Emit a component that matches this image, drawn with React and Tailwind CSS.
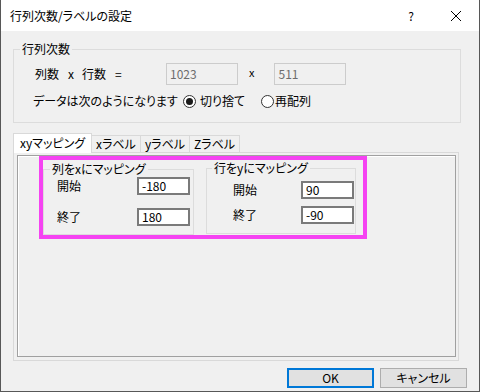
import React from 'react';

const jp = "font-['Noto_Sans_CJK_JP',sans-serif] [font-feature-settings:'palt']";

function Radio({ checked }) {
  return (
    <span className="flex w-[13px] h-[13px] shrink-0 items-center justify-center rounded-full border border-[#333] bg-white">
      {checked && <span className="w-[7px] h-[7px] rounded-full bg-[#1a1a1a]" />}
    </span>
  );
}

function Champ({ valeur, desactive, className = '' }) {
  if (desactive) {
    return (
      <div className={`flex items-center h-[22px] w-[72px] border border-[#cccccc] bg-[#f0f0f0] pl-[3px] text-[12px] text-[#6d6d6d] ${className}`}>
        {valeur}
      </div>
    );
  }
  return (
    <div className={`flex items-center h-[18px] w-[53px] border-2 border-[#7a7a7a] bg-white pl-[3px] text-[12px] text-black ${className}`}>
      {valeur}
    </div>
  );
}

function Ligne({ label, valeur, largeur, className = '' }) {
  return (
    <div className={`flex items-center ${className}`}>
      <span className={`${largeur} text-[12px] leading-[16px]`}>{label}</span>
      <Champ valeur={valeur} />
    </div>
  );
}

export default function App() {
  const onglets = ['xラベル', 'yラベル', 'Zラベル'];
  const largeursOnglets = ['w-[50px]', 'w-[50px]', 'w-[51px]'];

  return (
    <div className={`w-[480px] h-[392px] bg-[#f0f0f0] border-l border-r border-b border-[#575757] flex flex-col text-black ${jp}`}>

      {/* barre de titre */}
      <div className="h-[31px] shrink-0 bg-white flex items-center pl-[9px]">
        <span className="text-[12px] leading-[16px]">行列次数/ラベルの設定</span>
        <span className="ml-auto text-[12px] leading-[16px] mr-[36px]">?</span>
        <svg className="w-[12px] h-[12px] mr-[17px]" viewBox="0 0 12 12" fill="none" stroke="#000" strokeWidth="1">
          <path d="M1 1l10 10M11 1L1 11" />
        </svg>
      </div>

      {/* groupe 行列次数 */}
      <fieldset className="mt-[10px] ml-[12px] w-[448px] border border-[#dcdcdc] p-0 m-0">
        <legend className="ml-[6px] px-[2px] text-[12px] leading-[16px]">行列次数</legend>
        <div className="pl-[19px] pb-[13px]">
          <div className="flex items-center mt-[6px] h-[22px]">
            <div className="w-[133px] flex items-center pl-[2px] text-[12px] leading-[16px]">
              <span>列数</span>
              <span className="ml-[9px]">x</span>
              <span className="ml-[8px]">行数</span>
              <span className="ml-[9px]">=</span>
            </div>
            <Champ valeur="1023" desactive />
            <span className="ml-[11px] text-[11px] leading-[16px] -mt-[4px]">x</span>
            <Champ valeur="511" desactive className="ml-[20px] w-[71px]" />
          </div>
          <div className="flex items-center mt-[8px] h-[16px] text-[12px] leading-[16px]">
            <span className="w-[150px]">データは次のようになります</span>
            <Radio checked />
            <span className="ml-[4px] w-[61px]">切り捨て</span>
            <Radio />
            <span className="ml-[1px]">再配列</span>
          </div>
        </div>
      </fieldset>

      {/* onglets */}
      <div className="mt-[10px] ml-[12px] flex items-end h-[19px]">
        <div className="relative z-10 -mb-px h-[20px] w-[79px] bg-white border border-b-0 border-[#d9d9d9] flex items-center pl-[6px] text-[12px] leading-[16px] pb-[1px]">
          xyマッピング
        </div>
        {onglets.map((o, i) => (
          <div key={o} className={`h-[17px] ${largeursOnglets[i]} -ml-px border border-b-0 border-[#d9d9d9] bg-[#f0f0f0] flex items-center justify-center text-[12px] leading-[16px]`}>
            {o}
          </div>
        ))}
      </div>

      {/* panneau */}
      <div className="ml-[12px] w-[446px] h-[209px] border border-[#d9d9d9] pl-[3px] pt-[2px]">
        <div className="w-[439px] h-[202px] border border-[#a0a0a0] shadow-[inset_1px_1px_0_#ffffff]">
          <div className="ml-[21px] w-[328px] border-4 border-[#f543f2] flex items-start">
            <fieldset className="mt-px w-[151px] border border-[#dcdcdc] p-0 m-0">
              <legend className="ml-[6px] px-[2px] text-[12px] leading-[16px]">列をxにマッピング</legend>
              <div className="pl-[13px] pb-[8px]">
                <Ligne label="開始" valeur="-180" largeur="w-[80px]" />
                <Ligne label="終了" valeur="180" largeur="w-[80px]" className="mt-[13px]" />
              </div>
            </fieldset>
            <fieldset className="ml-[12px] w-[150px] border border-[#dcdcdc] p-0 m-0">
              <legend className="ml-[5px] px-[2px] text-[12px] leading-[16px]">行をyにマッピング</legend>
              <div className="pl-[26px] pt-[5px] pb-[9px]">
                <Ligne label="開始" valeur="90" largeur="w-[68px]" />
                <Ligne label="終了" valeur="-90" largeur="w-[68px]" className="mt-[7px]" />
              </div>
            </fieldset>
          </div>
        </div>
      </div>

      {/* boutons */}
      <div className="mt-[7px] flex justify-end gap-[6px] mr-[12px]">
        <button className="h-[20px] w-[87px] border-2 border-[#0078d7] bg-[#e1e1e1] text-[12px] leading-[16px]">OK</button>
        <button className="h-[20px] w-[87px] border border-[#adadad] bg-[#e1e1e1] text-[12px] leading-[16px]">キャンセル</button>
      </div>
    </div>
  );
}
